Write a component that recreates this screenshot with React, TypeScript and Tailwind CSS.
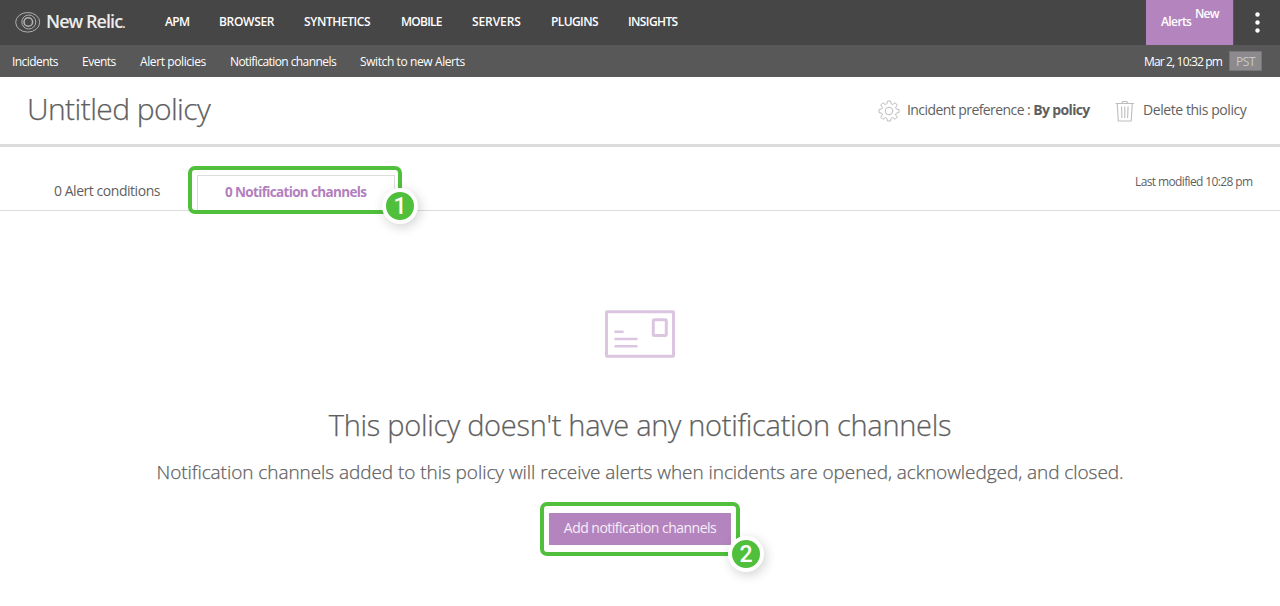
import React from "react";

const products = [
  { label: "APM", box: "w-6 mr-[30px]", text: "tracking-[-0.65px]" },
  { label: "BROWSER", box: "w-[55px] mr-[30px]", text: "tracking-[-0.3px]" },
  { label: "SYNTHETICS", box: "w-[67px] mr-[30px]", text: "tracking-[-0.4px]" },
  { label: "MOBILE", box: "w-[41px] mr-[30px]", text: "tracking-[-0.75px]" },
  { label: "SERVERS", box: "w-[49px] mr-[30px]", text: "tracking-[-0.1px]" },
  { label: "PLUGINS", box: "w-[47px] mr-[30px]", text: "tracking-[-0.6px]" },
  { label: "INSIGHTS", box: "w-[50px]", text: "tracking-[-0.6px]" },
];

const sections = [
  { label: "Incidents", box: "w-[46px] mr-6", text: "tracking-[-0.55px]" },
  { label: "Events", box: "w-[34px] mr-6", text: "tracking-[-0.5px]" },
  { label: "Alert policies", box: "w-[66px] mr-6", text: "tracking-[-0.4px]" },
  { label: "Notification channels", box: "w-[106px] mr-6", text: "tracking-[-0.57px]" },
  { label: "Switch to new Alerts", box: "w-[105px]", text: "tracking-[-0.4px]" },
];

function Logo() {
  return (
    <svg className="-mt-px" width="26" height="22" viewBox="0 0 26 22" fill="none" stroke="#b0b0b0">
      <ellipse cx="12.700" cy="11.300" rx="12" ry="9.800" strokeWidth="1" />
      <circle cx="13.800" cy="11" r="7" strokeWidth="1" />
      <circle cx="13.300" cy="11" r="4.300" strokeWidth="1.600" />
    </svg>
  );
}

function Gear() {
  return (
    <svg width="22" height="22" viewBox="0 0 22 22" fill="none" stroke="#bdbdbd" strokeWidth="1" strokeLinejoin="round">
      <path d="M9.400 1h3.200l.5 2.800 1.700.7 2.300-1.700 2.200 2.200-1.700 2.300.7 1.700 2.700.5v3.100l-2.700.5-.7 1.700 1.700 2.300-2.200 2.200-2.300-1.700-1.700.7-.5 2.700H9.400l-.5-2.700-1.700-.7-2.300 1.700-2.200-2.200 1.700-2.300-.7-1.700-2.700-.5V9.500l2.700-.5.7-1.700L2.700 5l2.200-2.200 2.300 1.700 1.700-.7z" />
      <circle cx="11" cy="11" r="3.800" />
    </svg>
  );
}

function Trash() {
  return (
    <svg width="20" height="22" viewBox="0 0 20 22" fill="none" stroke="#bdbdbd" strokeWidth="1.100" strokeLinejoin="round">
      <path d="M.5 3.500h18.500M7 3.300l.6-1.800h4.300l.6 1.800M2.200 3.500l1.100 17.500h12.900l1.100-17.500M6.500 6.500l.5 11.500M9.800 6.500V18M13.100 6.500L12.600 18" />
    </svg>
  );
}

function Envelope() {
  return (
    <svg width="70" height="48" viewBox="0 0 70 48" fill="none" stroke="#dbc5e1" strokeWidth="3">
      <rect x="1.500" y="1.700" width="67" height="44.500" rx="0.500" />
      <rect x="48.300" y="9.800" width="13" height="15.800" rx="1" />
      <path d="M10.500 21.800h7M10.500 29h21M10.500 36.300h21" strokeWidth="2.600" strokeLinecap="round" />
    </svg>
  );
}

function Step({ n, place }: { n: number; place: string }) {
  return (
    <span
      className={`absolute flex size-9 items-center justify-center rounded-full border-4 border-white bg-[#50bf3b] font-['Roboto',sans-serif] text-[23px] font-medium leading-none text-white shadow-[2px_3px_12px_rgba(0,0,0,0.18)] ${place}`}
    >
      {n}
    </span>
  );
}

export default function App() {
  return (
    <div className="h-[606px] w-[1280px] overflow-hidden whitespace-nowrap bg-white font-['Open_Sans',sans-serif] text-[#5f5f5f]">
      <header className="flex h-[45px] items-center bg-[#464646] pl-[15px] text-white">
        <Logo />
        <div className="ml-[5px] w-[119px] pb-px text-[18px] font-semibold leading-6 tracking-[-0.95px] text-[#ececec]">
          New Relic<span className="text-[12px]">.</span>
        </div>
        <nav className="flex pb-px text-xs font-semibold leading-4">
          {products.map((p) => (
            <a key={p.label} className={p.box}>
              <span className={p.text}>{p.label}</span>
            </a>
          ))}
        </nav>
        <div className="ml-auto flex h-full w-[88px] items-start border-r border-[#585858] bg-[#b484be] pl-[15px] text-xs font-semibold leading-4">
          <span className="w-[34px] pt-[14px] tracking-[-0.6px]">Alerts</span>
          <span className="pt-[6px] tracking-[-0.8px]">New</span>
        </div>
        <svg className="ml-[21px] mr-[20px]" width="5" height="22" viewBox="0 0 5 22" fill="#fff">
          <circle cx="2.500" cy="2.500" r="2.200" />
          <circle cx="2.500" cy="10.500" r="2.200" />
          <circle cx="2.500" cy="18.500" r="2.200" />
        </svg>
      </header>

      <div className="flex h-8 items-center bg-[#585858] pl-3 pr-[18px] text-xs text-white">
        <nav className="flex pt-px leading-4">
          {sections.map((s) => (
            <a key={s.label} className={s.box}>
              <span className={s.text}>{s.label}</span>
            </a>
          ))}
        </nav>
        <div className="ml-auto mr-[5px] w-[80px] pt-px tracking-[-0.85px]">Mar 2, 10:32 pm</div>
        <div className="flex h-5 w-[33px] items-center justify-center border border-[#777] bg-[#8c8a8c] pt-px tracking-[-0.4px] text-[#c8c8c8]">PST</div>
      </div>

      <div className="flex h-[70px] items-center border-b-[3px] border-[#dcdcdc] pl-[27px]">
        <h1 className="pb-1 text-[30px] font-light leading-9 tracking-[-0.6px] [-webkit-text-stroke:0.25px_#5f5f5f]">Untitled policy</h1>
        <div className="ml-auto flex w-[402px] items-center text-sm">
          <Gear />
          <div className="ml-[7px] w-[208px] pb-px tracking-[-0.57px]">
            Incident preference : <b className="font-bold tracking-[-0.65px]">By policy</b>
          </div>
          <Trash />
          <span className="ml-2 pb-px tracking-[-0.43px]">Delete this policy</span>
        </div>
      </div>

      <div className="flex h-16 items-start border-b border-[#dcdcdc] pl-[54px]">
        <a className="mt-[34px] w-[134px] text-sm leading-5 tracking-[-0.46px]">0 Alert conditions</a>
        <div className="relative z-10 mt-[19px] h-12 w-[214px] rounded-[7px] border-4 border-[#50bf3b] bg-white pl-[5px] pr-[3px] pt-[5px]">
          <a className="flex h-[35px] w-full items-center border border-b-0 border-[#dcdcdc] pb-0.5 pl-[27px] text-[13.500px] font-bold tracking-[-0.65px] text-[#b27fbe]">
            0 Notification channels
          </a>
          <Step n={1} place="-right-[20px] -bottom-[14px]" />
        </div>
        <span className="ml-auto mt-[27px] w-[145px] text-xs leading-4 tracking-[-0.62px]">Last modified 10:28 pm</span>
      </div>

      <main className="flex flex-col items-center pt-[99px]">
        <Envelope />
        <h2 className="mt-[47px] text-[29px] font-light leading-10 tracking-[-0.3px] [-webkit-text-stroke:0.25px_#5f5f5f]">
          This policy doesn't have any notification channels
        </h2>
        <p className="mt-[13px] text-[19px] font-light leading-7 tracking-[-0.06px] [-webkit-text-stroke:0.25px_#5f5f5f]">
          Notification channels added to this policy will receive alerts when incidents are opened, acknowledged, and closed.
        </p>
        <div className="relative mt-[16px] h-[54px] w-[200px] rounded-[7px] border-4 border-[#50bf3b] bg-white px-[5px] pt-[7px]">
          <button className="block h-8 w-full bg-[#b484be] pb-0.5 text-sm tracking-[-0.52px] text-[#f6effa]">Add notification channels</button>
          <Step n={2} place="-right-[28px] -bottom-[20px]" />
        </div>
      </main>
    </div>
  );
}
